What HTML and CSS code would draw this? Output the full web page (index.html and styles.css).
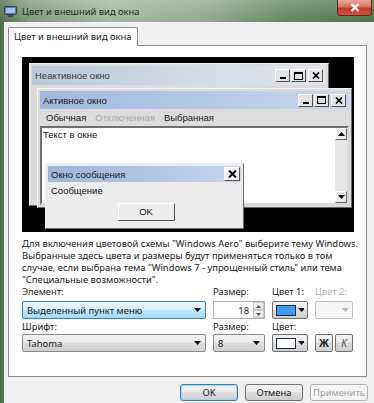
FILE: index.html
```html
<!DOCTYPE html>
<html lang="ru">
<head>
    <meta charset="UTF-8">
    <title>Цвет и внешний вид окна</title>
    <link rel="stylesheet" href="styles.css">
</head>
<body>
    <div class="window">
        <div class="titlebar">
            <svg class="app-icon" width="13" height="13" viewBox="0 0 13 13">
                <rect x="0.5" y="1.5" width="12" height="8" rx="1" fill="#5d7fa8" stroke="#2e3f55"/>
                <rect x="2" y="3" width="9" height="5" fill="#9cc4ea"/>
                <rect x="4" y="10" width="5" height="2" fill="#3c4c5c"/>
            </svg>
            <span class="title-text">Цвет и внешний вид окна</span>
            <div class="close-btn">
                <svg width="10" height="9" viewBox="0 0 10 9">
                    <path d="M1.5 1 L8.5 8 M8.5 1 L1.5 8" stroke="#fff" stroke-width="2.2"/>
                </svg>
            </div>
        </div>

        <div class="client">
            <div class="tabs">
                <div class="tab">Цвет и внешний вид окна</div>
            </div>

            <div class="panel">
                <div class="preview">
                    <!-- windows on the preview desktop -->
                    <div class="win inactive">
                        <div class="win-title">
                            <span>Неактивное окно</span>
                            <div class="caption-btns">
                                <div class="cbtn"><svg width="8" height="7"><rect x="1" y="5" width="6" height="2" fill="#000"/></svg></div>
                                <div class="cbtn"><svg width="9" height="8"><rect x="0.5" y="0.5" width="8" height="7" fill="none" stroke="#000"/><rect x="0" y="0" width="9" height="2" fill="#000"/></svg></div>
                                <div class="cbtn close"><svg width="8" height="7"><path d="M1 0.5 L7 6.5 M7 0.5 L1 6.5" stroke="#000" stroke-width="1.6"/></svg></div>
                            </div>
                        </div>
                    </div>

                    <div class="win active">
                        <div class="win-title">
                            <span>Активное окно</span>
                            <div class="caption-btns">
                                <div class="cbtn"><svg width="8" height="7"><rect x="1" y="5" width="6" height="2" fill="#000"/></svg></div>
                                <div class="cbtn"><svg width="9" height="8"><rect x="0.5" y="0.5" width="8" height="7" fill="none" stroke="#000"/><rect x="0" y="0" width="9" height="2" fill="#000"/></svg></div>
                                <div class="cbtn close"><svg width="8" height="7"><path d="M1 0.5 L7 6.5 M7 0.5 L1 6.5" stroke="#000" stroke-width="1.6"/></svg></div>
                            </div>
                        </div>
                        <div class="win-menu">
                            <span>Обычная</span>
                            <span class="off">Отключенная</span>
                            <span>Выбранная</span>
                        </div>
                        <div class="win-text">
                            <span class="text-line">Текст в окне</span>
                            <div class="scrollbar">
                                <div class="sbtn"><svg width="7" height="4"><path d="M0 4 L3.5 0 L7 4 Z" fill="#000"/></svg></div>
                                <div class="strack"></div>
                                <div class="sbtn"><svg width="7" height="4"><path d="M0 0 L7 0 L3.5 4 Z" fill="#000"/></svg></div>
                            </div>
                        </div>
                    </div>

                    <div class="win msgbox">
                        <div class="win-title">
                            <span>Окно сообщения</span>
                            <div class="cbtn big"><svg width="9" height="8"><path d="M1 0.5 L8 7.5 M8 0.5 L1 7.5" stroke="#000" stroke-width="2"/></svg></div>
                        </div>
                        <div class="msg-text">Сообщение</div>
                        <div class="msg-actions">
                            <div class="msg-ok">OK</div>
                        </div>
                    </div>
                </div>

                <p class="hint">Для включения цветовой схемы "Windows Aero" выберите тему Windows. Выбранные здесь цвета и размеры будут применяться только в том случае, если выбрана тема "Windows 7 - упрощенный стиль" или тема "Специальные возможности".</p>

                <div class="fields">
                    <label class="lbl">Элемент:</label>
                    <label class="lbl">Размер:</label>
                    <label class="lbl">Цвет 1:</label>
                    <label class="lbl off">Цвет 2:</label>

                    <div class="combo hot">
                        <span>Выделенный пункт меню</span>
                        <svg class="arrow" width="7" height="4"><path d="M0 0 L7 0 L3.5 4 Z" fill="#000"/></svg>
                    </div>
                    <div class="spinner">
                        <span>18</span>
                        <div class="spin-btns">
                            <div class="spin"><svg width="5" height="3"><path d="M0 3 L2.5 0 L5 3 Z" fill="#555"/></svg></div>
                            <div class="spin"><svg width="5" height="3"><path d="M0 0 L5 0 L2.5 3 Z" fill="#555"/></svg></div>
                        </div>
                    </div>
                    <div class="color-btn">
                        <div class="swatch blue"></div>
                        <svg width="7" height="4"><path d="M0 0 L7 0 L3.5 4 Z" fill="#000"/></svg>
                    </div>
                    <div class="color-btn disabled">
                        <svg width="7" height="4"><path d="M0 0 L7 0 L3.5 4 Z" fill="#b5b5b5"/></svg>
                    </div>

                    <label class="lbl">Шрифт:</label>
                    <label class="lbl">Размер:</label>
                    <label class="lbl">Цвет:</label>
                    <span></span>

                    <div class="combo">
                        <span>Tahoma</span>
                        <svg class="arrow" width="7" height="4"><path d="M0 0 L7 0 L3.5 4 Z" fill="#000"/></svg>
                    </div>
                    <div class="combo">
                        <span>8</span>
                        <svg class="arrow" width="7" height="4"><path d="M0 0 L7 0 L3.5 4 Z" fill="#000"/></svg>
                    </div>
                    <div class="color-btn">
                        <div class="swatch white"></div>
                        <svg width="7" height="4"><path d="M0 0 L7 0 L3.5 4 Z" fill="#000"/></svg>
                    </div>
                    <div class="style-btns">
                        <div class="sq-btn bold">Ж</div>
                        <div class="sq-btn italic">К</div>
                    </div>
                </div>
            </div>

            <div class="dialog-buttons">
                <div class="btn default">OK</div>
                <div class="btn">Отмена</div>
                <div class="btn disabled">Применить</div>
            </div>
        </div>
    </div>
</body>
</html>
```

FILE: styles.css
```css
* {
    margin: 0;
    padding: 0;
    box-sizing: border-box;
}

body {
    width: 374px;
    height: 403px;
    overflow: hidden;
    font-family: 'Noto Sans', 'Open Sans', sans-serif;
    font-size: 9.4px;
    color: #1b1b1b;
    background: #6f8b6b;
}

.window {
    height: 403px;
    display: flex;
    flex-direction: column;
    background:
        linear-gradient(180deg, rgba(255,255,255,0.22) 0px, rgba(255,255,255,0) 22px),
        linear-gradient(90deg, #4f6d4c 0%, #7f9a7b 8%, #a3b79f 30%, #8ea98a 55%, #5f845b 78%, #4e724b 100%);
}

/* title bar */
.titlebar {
    height: 22px;
    display: flex;
    align-items: flex-start;
    padding-left: 4px;
    flex-shrink: 0;
}

.app-icon {
    margin-top: 5px;
}

.title-text {
    margin: 6px 0 0 5px;
    line-height: 12px;
    color: #1d2a1b;
}

.close-btn {
    margin-left: auto;
    margin-right: 2px;
    width: 35px;
    height: 16px;
    border: 1px solid #6b2218;
    border-top: none;
    border-radius: 0 0 4px 4px;
    background: linear-gradient(180deg, #e9a99a 0%, #d6705c 45%, #bf3a25 55%, #c9563f 100%);
    display: flex;
    justify-content: center;
    align-items: center;
}

/* dialog client area */
.client {
    flex: 1;
    margin-left: 4px;
    background: #f0f0f0;
    padding: 5px 6px 0 4px;
    display: flex;
    flex-direction: column;
}

.tabs {
    display: flex;
    height: 19px;
}

.tab {
    background: #fff;
    border: 1px solid #898c95;
    border-bottom: none;
    border-radius: 2px 2px 0 0;
    padding: 0 5px;
    white-space: nowrap;
    line-height: 18px;
    position: relative;
    z-index: 1;
}

.panel {
    margin-top: -1px;
    width: 359px;
    height: 332px;
    background: #fff;
    border: 1px solid #898c95;
    padding: 11px 0 0 13px;
}

/* preview */
.preview {
    position: relative;
    width: 332px;
    height: 175px;
    background: #000;
    font-family: 'Liberation Sans', Arial, sans-serif;
    font-size: 9.5px;
    overflow: hidden;
}

.win {
    position: absolute;
    background: #dcdcdc;
    border: 1px solid #f4f4f4;
    border-right-color: #6a6a6a;
    border-bottom-color: #6a6a6a;
    padding: 2px;
}

.inactive {
    left: 7px;
    top: 6px;
    width: 300px;
    height: 143px;
}

.active {
    left: 15px;
    top: 31px;
    width: 315px;
    height: 120px;
    display: flex;
    flex-direction: column;
}

.msgbox {
    left: 23px;
    top: 106px;
    width: 199px;
    height: 66px;
    background: #ececec;
    display: flex;
    flex-direction: column;
}

.win-title {
    height: 19px;
    display: flex;
    align-items: center;
    padding: 0 3px 0 3px;
    color: #1a1a1a;
}

.inactive .win-title {
    background: linear-gradient(90deg, #bcc8d7 0%, #d4dce6 60%, #e2e7ed 100%);
    color: #3a3a3a;
}

.active .win-title {
    background: linear-gradient(90deg, #9fb8dc 0%, #b7cbe8 60%, #c7d7ee 100%);
    height: 18px;
}

.msgbox .win-title {
    background: linear-gradient(90deg, #9db6da 0%, #b4c8e6 60%, #c5d6ee 100%);
    height: 16px;
    padding-right: 1px;
}

.caption-btns {
    margin-left: auto;
    display: flex;
    gap: 1px;
}

.cbtn {
    width: 15px;
    height: 13px;
    background: #e4e4e4;
    border: 1px solid #fff;
    border-right-color: #555;
    border-bottom-color: #555;
    display: flex;
    align-items: center;
    justify-content: center;
}

.cbtn.close {
    margin-left: 1px;
}

.cbtn.big {
    margin-left: auto;
    width: 16px;
    height: 14px;
    background: #f4f4f4;
}

.win-menu {
    height: 16px;
    display: flex;
    align-items: center;
    gap: 9px;
    padding-left: 6px;
    color: #1a1a1a;
}

.win-menu .off {
    color: #a8a8a8;
}

.win-text {
    flex: 1;
    margin-top: 1px;
    background: #fff;
    border: 2px solid #6e6e6e;
    border-right-color: #dadada;
    border-bottom-color: #dadada;
    display: flex;
    justify-content: space-between;
}

.text-line {
    padding: 1px 0 0 1px;
    color: #111;
}

.scrollbar {
    width: 12px;
    display: flex;
    flex-direction: column;
    background: #e6e6e6;
}

.sbtn {
    height: 12px;
    background: #ececec;
    border: 1px solid #fff;
    border-right-color: #666;
    border-bottom-color: #666;
    display: flex;
    align-items: center;
    justify-content: center;
}

.strack {
    flex: 1;
}

.msg-text {
    padding: 3px 0 0 3px;
    height: 18px;
    color: #111;
}

.msg-actions {
    display: flex;
    justify-content: center;
    padding: 3px 0 0 3px;
}

.msg-ok {
    width: 57px;
    height: 18px;
    background: #ececec;
    border: 1px solid #fff;
    border-right-color: #555;
    border-bottom-color: #555;
    text-align: center;
    line-height: 16px;
    color: #111;
}

/* description */
.hint {
    margin-top: 6px;
    width: 340px;
    line-height: 12px;
    color: #1b1b1b;
}

/* element settings */
.fields {
    margin-top: 0;
    display: grid;
    grid-template-columns: 184px 52px 36px 38px;
    grid-template-rows: 15px 18px 15px 18px;
    column-gap: 7px;
}

.lbl {
    line-height: 12px;
    color: #1b1b1b;
}

.fields .lbl:nth-child(n+9) {
    padding-top: 2px;
}

.lbl.off {
    color: #b0b0b0;
}

.combo {
    display: flex;
    align-items: center;
    justify-content: space-between;
    padding: 0 4px 0 4px;
    border: 1px solid #8a8a8a;
    border-radius: 2px;
    background: linear-gradient(180deg, #f3f3f3 0%, #ebebeb 45%, #dddddd 50%, #cfcfcf 100%);
}

.combo.hot {
    border-color: #3c7fb1;
    background: linear-gradient(180deg, #eaf6fd 0%, #d9f0fc 45%, #bee6fd 50%, #a7d9f5 100%);
}

.spinner {
    display: flex;
    align-items: center;
    justify-content: flex-end;
    border: 1px solid #abadb3;
    background: #fff;
    padding-left: 4px;
}

.spinner span {
    margin-right: 4px;
}

.spin-btns {
    display: flex;
    flex-direction: column;
    height: 100%;
    width: 11px;
}

.spin {
    flex: 1;
    border: 1px solid #c5c5c5;
    background: linear-gradient(180deg, #f6f6f6, #e4e4e4);
    display: flex;
    align-items: center;
    justify-content: center;
}

.color-btn {
    display: flex;
    align-items: center;
    justify-content: flex-end;
    gap: 2px;
    padding: 0 3px;
    border: 1px solid #707070;
    border-radius: 2px;
    background: linear-gradient(180deg, #f2f2f2 0%, #ebebeb 45%, #dddddd 50%, #cfcfcf 100%);
}

.color-btn.disabled {
    border-color: #c0c4c7;
    background: #f4f4f4;
}

.swatch {
    width: 23px;
    height: 11px;
    border: 1px solid #1d2a3a;
}

.swatch.blue {
    background: #3d9df2;
}

.swatch.white {
    background: #fff;
}

.style-btns {
    display: flex;
    gap: 2px;
}

.sq-btn {
    flex: 1;
    border: 1px solid #707070;
    border-radius: 2px;
    background: linear-gradient(180deg, #f2f2f2 0%, #ebebeb 45%, #dddddd 50%, #cfcfcf 100%);
    display: flex;
    align-items: center;
    justify-content: center;
    font-size: 10px;
}

.sq-btn.bold {
    font-weight: bold;
}

.sq-btn.italic {
    font-style: italic;
    color: #555;
}

/* bottom buttons */
.dialog-buttons {
    margin-top: 7px;
    display: flex;
    justify-content: flex-end;
    gap: 7px;
}

.btn {
    width: 58px;
    height: 17px;
    border: 1px solid #707070;
    border-radius: 3px;
    background: linear-gradient(180deg, #f2f2f2 0%, #ebebeb 45%, #dddddd 50%, #cfcfcf 100%);
    text-align: center;
    line-height: 15px;
}

.btn.default {
    border-color: #3c7fb1;
    box-shadow: inset 0 0 0 1px #9fd7f5;
}

.btn.disabled {
    border-color: #adb2b5;
    background: #f4f4f4;
    color: #a0a0a0;
}
```
